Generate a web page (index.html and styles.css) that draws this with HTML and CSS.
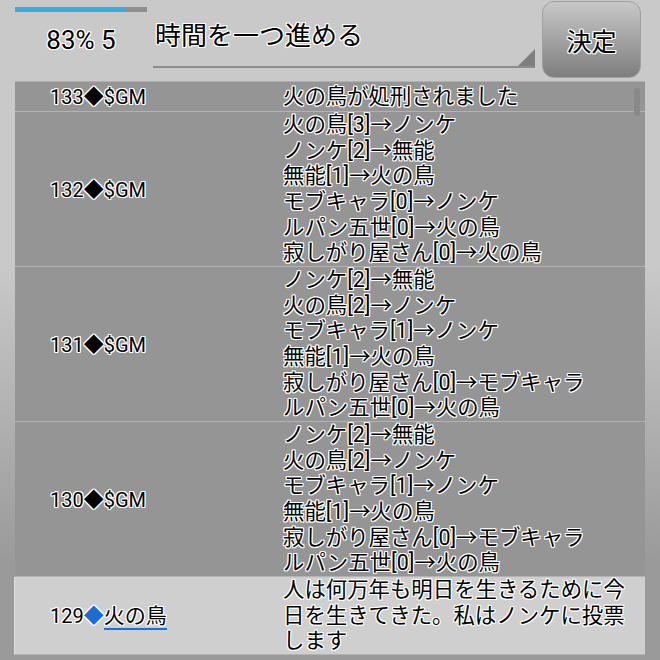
FILE: index.html
```html
<!DOCTYPE html>
<html lang="ja">
<head>
    <meta charset="UTF-8">
    <meta name="viewport" content="width=device-width, initial-scale=1.0">
    <title>Game Log</title>
    <link rel="stylesheet" href="styles.css">
</head>
<body>
    <div class="header">
        <div class="status">
            <div class="progress"><div class="progress-fill" style="width: 83%"></div></div>
            <div class="status-text">83% 5</div>
        </div>
        <div class="spinner">
            <span class="spinner-text">時間を一つ進める</span>
            <span class="spinner-arrow"></span>
        </div>
        <button class="decide">決定</button>
    </div>

    <!-- log list -->
    <div class="log">
        <div class="scrollbar"></div>
        <div class="row first">
            <div class="who">133<span class="mark">◆</span>$GM</div>
            <div class="msg">火の鳥が処刑されました</div>
        </div>
        <div class="row">
            <div class="who">132<span class="mark">◆</span>$GM</div>
            <div class="msg">火の鳥[3]→ノンケ<br>ノンケ[2]→無能<br>無能[1]→火の鳥<br>モブキャラ[0]→ノンケ<br>ルパン五世[0]→火の鳥<br>寂しがり屋さん[0]→火の鳥</div>
        </div>
        <div class="row">
            <div class="who">131<span class="mark">◆</span>$GM</div>
            <div class="msg">ノンケ[2]→無能<br>火の鳥[2]→ノンケ<br>モブキャラ[1]→ノンケ<br>無能[1]→火の鳥<br>寂しがり屋さん[0]→モブキャラ<br>ルパン五世[0]→火の鳥</div>
        </div>
        <div class="row">
            <div class="who">130<span class="mark">◆</span>$GM</div>
            <div class="msg">ノンケ[2]→無能<br>火の鳥[2]→ノンケ<br>モブキャラ[1]→ノンケ<br>無能[1]→火の鳥<br>寂しがり屋さん[0]→モブキャラ<br>ルパン五世[0]→火の鳥</div>
        </div>
        <div class="row player">
            <div class="who">129<span class="mark blue">◆</span><span class="name">火の鳥</span></div>
            <div class="msg">人は何万年も明日を生きるために今日を生きてきた。私はノンケに投票します</div>
        </div>
    </div>
</body>
</html>
```

FILE: styles.css
```css
body {
    margin: 0;
    height: 660px;
    overflow: hidden;
    font-family: Roboto, "Noto Sans CJK JP", sans-serif;
    color: #000;
    background: linear-gradient(#c9c9c9 0, #c9c9c9 40%, #9a9a9a 85%);
}
.header, .log {
    text-shadow: 1px 0 #fff, -1px 0 #fff, 0 1px #fff, 0 -1px #fff,
        1px 1px #fff, -1px -1px #fff, 1px -1px #fff, -1px 1px #fff;
}
.header {
    display: flex;
    height: 81px;
    background: #c9c9c9;
}
.status {
    width: 132px;
    margin-left: 15px;
    padding-top: 7px;
}
.progress {
    height: 5px;
    background: #8f8f8f;
}
.progress-fill {
    height: 100%;
    background: #3aacdc;
}
.status-text {
    margin-top: 13px;
    font-size: 26px;
    line-height: 30px;
    text-align: center;
}
.spinner {
    position: relative;
    width: 382px;
    height: 68px;
    margin-left: 6px;
    border-bottom: 2px solid #8c8c8c;
    box-sizing: border-box;
}
.spinner-text {
    display: block;
    padding: 19px 0 0 2px;
    font-size: 26px;
    line-height: 34px;
}
.spinner-arrow {
    position: absolute;
    right: 0;
    bottom: 0;
    width: 0;
    height: 0;
    border-left: 17px solid transparent;
    border-bottom: 17px solid #7f7f7f;
}
.decide {
    width: 99px;
    height: 77px;
    margin: 1px 0 0 7px;
    border: 1px solid #a0a0a0;
    border-radius: 12px;
    background: linear-gradient(#c8c8c8, #7e7e7e);
    font-family: inherit;
    font-size: 25px;
    color: #000;
    text-shadow: inherit;
    padding: 0;
}
.log {
    position: relative;
    margin: 0 15px;
    border-top: 1px solid #b0b0b0;
    background: #959595;
}
.scrollbar {
    position: absolute;
    left: 619px;
    top: 6px;
    width: 6px;
    height: 28px;
    border-radius: 2px;
    background: #898989;
}
.row {
    display: flex;
    align-items: center;
    border-bottom: 1px solid #b3b3b3;
}
.row.first {
    min-height: 29px;
}
.who {
    width: 233px;
    padding-left: 35px;
    font-size: 20px;
    line-height: 26px;
}
.mark {
    font-family: "Noto Sans CJK JP", sans-serif;
}
.msg {
    flex: 1;
    font-size: 21.4px;
    line-height: 25.67px;
    padding-right: 12px;
}
.row.player {
    background: #cfcfcf;
    border-left: 1px solid #e0e0e0;
    margin-left: -1px;
    align-items: flex-start;
}
.row.player .who {
    align-self: center;
}
.mark.blue {
    color: #1f6bd0;
}
.name {
    font-size: 21px;
    border-bottom: 2px solid #1f6fd0;
}
```
